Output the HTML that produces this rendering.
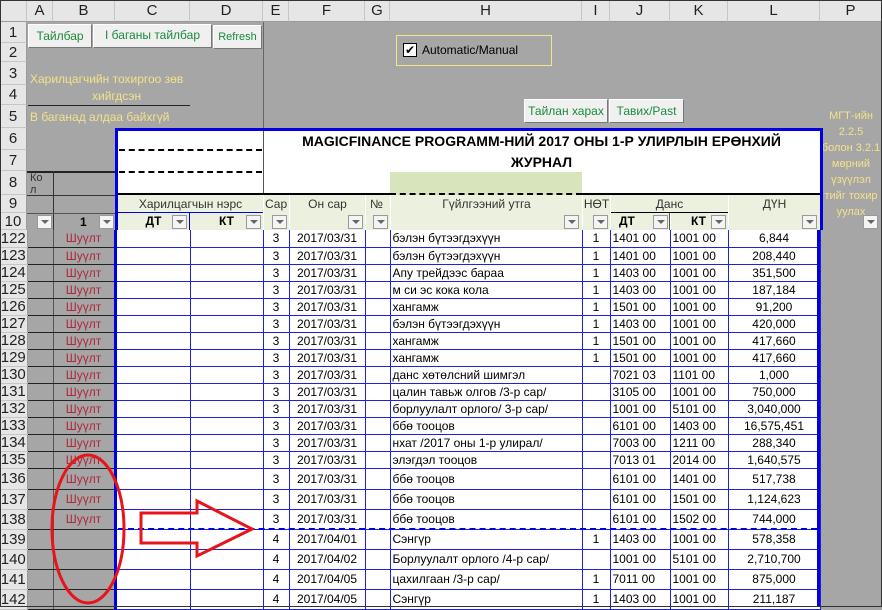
<!DOCTYPE html>
<html><head><meta charset="utf-8"><style>
*{margin:0;padding:0;box-sizing:border-box}
body{width:882px;height:607px;overflow:hidden;background:#a6a6a6;font-family:"Liberation Sans","DejaVu Sans",sans-serif;font-size:12px;position:relative;color:#000}
.a{position:absolute}
.ch{position:absolute;top:0;height:22px;background:#e6e6e6;border-right:1px solid #c6c6c6;border-bottom:1px solid #9a9a9a;text-align:center;line-height:22px;font-size:15px;color:#222}
.rh{position:absolute;left:0;width:27px;background:#e6e6e6;border-bottom:1px solid #c6c6c6;border-right:1px solid #9a9a9a;text-align:center;font-size:15px;color:#222}
.btn{position:absolute;background:#f0f0f0;border:1px solid #fff;border-right-color:#777;border-bottom-color:#777;color:#1a8a3a;text-align:center;font-size:12px}
.yt{position:absolute;color:#f2e28a;font-size:12px}
.hd{position:absolute;background:#ebf1de;text-align:center;font-size:12px;color:#333}
.dd{position:absolute;width:15px;height:14px;background:#f4f4f4;border:1px solid #999;}
.dd:after{content:"";position:absolute;left:3px;top:4px;border-left:4px solid transparent;border-right:4px solid transparent;border-top:4px solid #666}
table{position:absolute;left:0;top:230px;border-collapse:collapse;table-layout:fixed}
td{font-size:12px;line-height:12px;white-space:nowrap;overflow:hidden;padding:0 2px}
td.r{background:#e6e6e6;font-size:15px;line-height:13px;text-align:center;color:#222;border-bottom:1px solid #c6c6c6;border-right:1px solid #9a9a9a;padding:0}
td.g{background:#a6a6a6;border-right:1px solid #555;border-bottom:1px solid #222}
td.b{background:#a6a6a6;color:#b0283a;text-align:center;border-bottom:1px solid #222;border-right:3px solid #0000e0}
td.w{background:#fff;border-right:1px solid #2020e0;border-bottom:1px solid #2020e0}
td.c{text-align:center}
td.p{background:#a6a6a6;border:none}
</style></head><body>
<div class="ch" style="left:0;width:27px;background:#e6e6e6"></div>
<div class="ch" style="left:27px;width:26px">A</div>
<div class="ch" style="left:53px;width:62px">B</div>
<div class="ch" style="left:115px;width:75px">C</div>
<div class="ch" style="left:190px;width:73px">D</div>
<div class="ch" style="left:263px;width:26px">E</div>
<div class="ch" style="left:289px;width:76px">F</div>
<div class="ch" style="left:365px;width:25px">G</div>
<div class="ch" style="left:390px;width:192px">H</div>
<div class="ch" style="left:582px;width:28px">I</div>
<div class="ch" style="left:610px;width:60px">J</div>
<div class="ch" style="left:670px;width:58px">K</div>
<div class="ch" style="left:728px;width:92px">L</div>
<div class="ch" style="left:820px;width:62px">P</div>
<div class="rh" style="top:22px;height:21px;line-height:21px">1</div>
<div class="rh" style="top:43px;height:19px;line-height:19px">2</div>
<div class="rh" style="top:62px;height:23px;line-height:23px">3</div>
<div class="rh" style="top:85px;height:20px;line-height:20px">4</div>
<div class="rh" style="top:105px;height:23px;line-height:23px">5</div>
<div class="rh" style="top:128px;height:22px;line-height:22px">6</div>
<div class="rh" style="top:150px;height:21px;line-height:21px">7</div>
<div class="rh" style="top:171px;height:24px;line-height:24px">8</div>
<div class="rh" style="top:195px;height:18px;line-height:18px">9</div>
<div class="rh" style="top:213px;height:17px;line-height:17px">10</div>
<div class="a" style="left:263px;top:22px;width:1px;height:106px;background:#666"></div>
<div class="btn" style="left:28px;top:24px;width:64px;height:24px;line-height:22px">Тайлбар</div>
<div class="btn" style="left:93px;top:24px;width:119px;height:24px;line-height:20px">I баганы тайлбар</div>
<div class="btn" style="left:213px;top:25px;width:49px;height:24px;line-height:22px;font-size:11px">Refresh</div>
<div class="btn" style="left:524px;top:99px;width:84px;height:24px;line-height:22px">Тайлан харах</div>
<div class="btn" style="left:609px;top:99px;width:75px;height:24px;line-height:22px">Тавих/Past</div>
<div class="a" style="left:396px;top:35px;width:156px;height:31px;border:1px solid #f0e68c"></div>
<div class="a" style="left:403px;top:43px;width:14px;height:14px;border:1px solid #000;background:#fff;font-size:12px;line-height:12px;text-align:center;font-weight:bold">✔</div>
<div class="a" style="left:422px;top:43px;font-size:12px">Automatic/Manual</div>
<div class="yt" style="left:30px;top:72px">Харилцагчийн тохиргоо зөв</div>
<div class="yt" style="left:92px;top:89px">хийгдсэн</div>
<div class="a" style="left:28px;top:105px;width:162px;height:1px;background:#222"></div>
<div class="yt" style="left:30px;top:110px">B баганад алдаа байхгүй</div>
<div class="yt" style="left:820px;top:108px;width:62px;text-align:center;line-height:16px;font-size:11px">МГТ-ийн<br>2.2.5<br>болон 3.2.1<br>мөрний<br>үзүүлэл<br>тийг тохир<br>уулах</div>
<div class="a" style="left:115px;top:128px;width:708px;height:102px;background:#fff;border-top:3px solid #0000e0;border-left:3px solid #0000e0;border-right:3px solid #0000e0"></div>
<div class="a" style="left:263px;top:131px;width:1px;height:64px;background:#555"></div>
<div class="a" style="left:119px;top:149px;width:143px;border-top:2px dashed #000"></div>
<div class="a" style="left:119px;top:171px;width:143px;border-top:2px dashed #000"></div>
<div class="a" style="left:263px;top:131px;width:557px;text-align:center;font-weight:bold;font-size:14px;line-height:21px">MAGICFINANCE PROGRAMM-НИЙ 2017 ОНЫ 1-Р УЛИРЛЫН ЕРӨНХИЙ<br>ЖУРНАЛ</div>
<div class="a" style="left:390px;top:172px;width:192px;height:23px;background:#d8e4bc"></div>
<div class="a" style="left:27px;top:171px;width:88px;height:2px;background:#222"></div>
<div class="a" style="left:30px;top:172px;font-size:11px;color:#333;line-height:12px">Ко<br>л</div>
<div class="a" style="left:53px;top:171px;width:1px;height:59px;background:#333"></div>
<div class="a" style="left:27px;top:195px;width:88px;height:1px;background:#333"></div>
<div class="a" style="left:27px;top:213px;width:88px;height:1px;background:#555"></div>
<div class="dd" style="left:37px;top:215px"></div>
<div class="a" style="left:80px;top:215px;font-weight:bold;font-size:12px">1</div>
<div class="dd" style="left:99px;top:215px"></div>
<div class="a" style="left:118px;top:193px;width:272px;height:2px;background:#000"></div>
<div class="a" style="left:390px;top:193px;width:192px;border-top:2px dashed #000"></div>
<div class="a" style="left:582px;top:193px;width:238px;height:2px;background:#000"></div>
<div class="hd" style="left:118px;top:195px;width:145px;height:18px;line-height:18px;border-bottom:1px solid #0000e0">Харилцагчын нэрс</div>
<div class="hd" style="left:118px;top:213px;width:72px;height:17px;line-height:17px;font-weight:bold;color:#000;border-right:1px solid #0000e0">ДТ</div>
<div class="hd" style="left:190px;top:213px;width:73px;height:17px;line-height:17px;font-weight:bold;color:#000">КТ</div>
<div class="hd" style="left:264px;top:195px;width:25px;height:35px;line-height:18px;text-align:left;padding-left:1px">Сар</div>
<div class="hd" style="left:290px;top:195px;width:75px;height:35px;line-height:18px">Он сар</div>
<div class="hd" style="left:366px;top:195px;width:24px;height:35px;line-height:18px;text-align:left;padding-left:4px">№</div>
<div class="hd" style="left:391px;top:195px;width:191px;height:35px;line-height:18px">Гүйлгээний утга</div>
<div class="hd" style="left:583px;top:195px;width:27px;height:35px;line-height:18px">НӨТ</div>
<div class="hd" style="left:611px;top:195px;width:117px;height:18px;line-height:18px;border-bottom:1px solid #000">Данс</div>
<div class="hd" style="left:611px;top:213px;width:59px;height:17px;line-height:17px;font-weight:bold;color:#000;text-align:left;padding-left:8px;border-right:1px solid #555">ДТ</div>
<div class="hd" style="left:671px;top:213px;width:57px;height:17px;line-height:17px;font-weight:bold;color:#000;text-align:left;padding-left:20px">КТ</div>
<div class="hd" style="left:729px;top:195px;width:91px;height:35px;line-height:18px">ДҮН</div>
<div class="dd" style="left:172px;top:215px"></div>
<div class="dd" style="left:246px;top:215px"></div>
<div class="dd" style="left:272px;top:215px"></div>
<div class="dd" style="left:348px;top:215px"></div>
<div class="dd" style="left:373px;top:215px"></div>
<div class="dd" style="left:564px;top:215px"></div>
<div class="dd" style="left:593px;top:215px"></div>
<div class="dd" style="left:653px;top:215px"></div>
<div class="dd" style="left:711px;top:215px"></div>
<div class="dd" style="left:802px;top:215px"></div>
<div class="dd" style="left:863px;top:215px"></div>
<table>
<colgroup><col style="width:27px"><col style="width:26px"><col style="width:62px"><col style="width:75px"><col style="width:73px"><col style="width:26px"><col style="width:76px"><col style="width:25px"><col style="width:192px"><col style="width:28px"><col style="width:60px"><col style="width:58px"><col style="width:92px"><col style="width:62px"></colgroup>
<tr style="height:17px"><td class="r">122</td><td class="g"></td><td class="b">Шуүлт</td><td class="w"></td><td class="w"></td><td class="w c">3</td><td class="w c">2017/03/31</td><td class="w"></td><td class="w">бэлэн бүтээгдэхүүн</td><td class="w c">1</td><td class="w">1401 00</td><td class="w">1001 00</td><td class="w c">6,844</td><td class="p"></td></tr>
<tr style="height:17px"><td class="r">123</td><td class="g"></td><td class="b">Шуүлт</td><td class="w"></td><td class="w"></td><td class="w c">3</td><td class="w c">2017/03/31</td><td class="w"></td><td class="w">бэлэн бүтээгдэхүүн</td><td class="w c">1</td><td class="w">1401 00</td><td class="w">1001 00</td><td class="w c">208,440</td><td class="p"></td></tr>
<tr style="height:17px"><td class="r">124</td><td class="g"></td><td class="b">Шуүлт</td><td class="w"></td><td class="w"></td><td class="w c">3</td><td class="w c">2017/03/31</td><td class="w"></td><td class="w">Апу трейдээс бараа</td><td class="w c">1</td><td class="w">1403 00</td><td class="w">1001 00</td><td class="w c">351,500</td><td class="p"></td></tr>
<tr style="height:17px"><td class="r">125</td><td class="g"></td><td class="b">Шуүлт</td><td class="w"></td><td class="w"></td><td class="w c">3</td><td class="w c">2017/03/31</td><td class="w"></td><td class="w">м си эс кока кола</td><td class="w c">1</td><td class="w">1403 00</td><td class="w">1001 00</td><td class="w c">187,184</td><td class="p"></td></tr>
<tr style="height:17px"><td class="r">126</td><td class="g"></td><td class="b">Шуүлт</td><td class="w"></td><td class="w"></td><td class="w c">3</td><td class="w c">2017/03/31</td><td class="w"></td><td class="w">хангамж</td><td class="w c">1</td><td class="w">1501 00</td><td class="w">1001 00</td><td class="w c">91,200</td><td class="p"></td></tr>
<tr style="height:17px"><td class="r">127</td><td class="g"></td><td class="b">Шуүлт</td><td class="w"></td><td class="w"></td><td class="w c">3</td><td class="w c">2017/03/31</td><td class="w"></td><td class="w">бэлэн бүтээгдэхүүн</td><td class="w c">1</td><td class="w">1403 00</td><td class="w">1001 00</td><td class="w c">420,000</td><td class="p"></td></tr>
<tr style="height:17px"><td class="r">128</td><td class="g"></td><td class="b">Шуүлт</td><td class="w"></td><td class="w"></td><td class="w c">3</td><td class="w c">2017/03/31</td><td class="w"></td><td class="w">хангамж</td><td class="w c">1</td><td class="w">1501 00</td><td class="w">1001 00</td><td class="w c">417,660</td><td class="p"></td></tr>
<tr style="height:17px"><td class="r">129</td><td class="g"></td><td class="b">Шуүлт</td><td class="w"></td><td class="w"></td><td class="w c">3</td><td class="w c">2017/03/31</td><td class="w"></td><td class="w">хангамж</td><td class="w c">1</td><td class="w">1501 00</td><td class="w">1001 00</td><td class="w c">417,660</td><td class="p"></td></tr>
<tr style="height:17px"><td class="r">130</td><td class="g"></td><td class="b">Шуүлт</td><td class="w"></td><td class="w"></td><td class="w c">3</td><td class="w c">2017/03/31</td><td class="w"></td><td class="w">данс хөтөлсний шимгэл</td><td class="w"></td><td class="w">7021 03</td><td class="w">1101 00</td><td class="w c">1,000</td><td class="p"></td></tr>
<tr style="height:17px"><td class="r">131</td><td class="g"></td><td class="b">Шуүлт</td><td class="w"></td><td class="w"></td><td class="w c">3</td><td class="w c">2017/03/31</td><td class="w"></td><td class="w">цалин тавьж олгов /3-р сар/</td><td class="w"></td><td class="w">3105 00</td><td class="w">1001 00</td><td class="w c">750,000</td><td class="p"></td></tr>
<tr style="height:17px"><td class="r">132</td><td class="g"></td><td class="b">Шуүлт</td><td class="w"></td><td class="w"></td><td class="w c">3</td><td class="w c">2017/03/31</td><td class="w"></td><td class="w">борлуулалт орлого/ 3-р сар/</td><td class="w"></td><td class="w">1001 00</td><td class="w">5101 00</td><td class="w c">3,040,000</td><td class="p"></td></tr>
<tr style="height:17px"><td class="r">133</td><td class="g"></td><td class="b">Шуүлт</td><td class="w"></td><td class="w"></td><td class="w c">3</td><td class="w c">2017/03/31</td><td class="w"></td><td class="w">ббө тооцов</td><td class="w"></td><td class="w">6101 00</td><td class="w">1403 00</td><td class="w c">16,575,451</td><td class="p"></td></tr>
<tr style="height:17px"><td class="r">134</td><td class="g"></td><td class="b">Шуүлт</td><td class="w"></td><td class="w"></td><td class="w c">3</td><td class="w c">2017/03/31</td><td class="w"></td><td class="w">нхат /2017 оны 1-р улирал/</td><td class="w"></td><td class="w">7003 00</td><td class="w">1211 00</td><td class="w c">288,340</td><td class="p"></td></tr>
<tr style="height:17px"><td class="r">135</td><td class="g"></td><td class="b">Шуүлт</td><td class="w"></td><td class="w"></td><td class="w c">3</td><td class="w c">2017/03/31</td><td class="w"></td><td class="w">элэгдэл тооцов</td><td class="w"></td><td class="w">7013 01</td><td class="w">2014 00</td><td class="w c">1,640,575</td><td class="p"></td></tr>
<tr style="height:21px"><td class="r">136</td><td class="g"></td><td class="b">Шуүлт</td><td class="w"></td><td class="w"></td><td class="w c">3</td><td class="w c">2017/03/31</td><td class="w"></td><td class="w">ббө тооцов</td><td class="w"></td><td class="w">6101 00</td><td class="w">1401 00</td><td class="w c">517,738</td><td class="p"></td></tr>
<tr style="height:20px"><td class="r">137</td><td class="g"></td><td class="b">Шуүлт</td><td class="w"></td><td class="w"></td><td class="w c">3</td><td class="w c">2017/03/31</td><td class="w"></td><td class="w">ббө тооцов</td><td class="w"></td><td class="w">6101 00</td><td class="w">1501 00</td><td class="w c">1,124,623</td><td class="p"></td></tr>
<tr style="height:20px"><td class="r">138</td><td class="g"></td><td class="b">Шуүлт</td><td class="w"></td><td class="w"></td><td class="w c">3</td><td class="w c">2017/03/31</td><td class="w"></td><td class="w">ббө тооцов</td><td class="w"></td><td class="w">6101 00</td><td class="w">1502 00</td><td class="w c">744,000</td><td class="p"></td></tr>
<tr style="height:20px"><td class="r">139</td><td class="g"></td><td class="b"></td><td class="w"></td><td class="w"></td><td class="w c">4</td><td class="w c">2017/04/01</td><td class="w"></td><td class="w">Сэнгүр</td><td class="w c">1</td><td class="w">1403 00</td><td class="w">1001 00</td><td class="w c">578,358</td><td class="p"></td></tr>
<tr style="height:20px"><td class="r">140</td><td class="g"></td><td class="b"></td><td class="w"></td><td class="w"></td><td class="w c">4</td><td class="w c">2017/04/02</td><td class="w"></td><td class="w">Борлуулалт орлого /4-р сар/</td><td class="w"></td><td class="w">1001 00</td><td class="w">5101 00</td><td class="w c">2,710,700</td><td class="p"></td></tr>
<tr style="height:20px"><td class="r">141</td><td class="g"></td><td class="b"></td><td class="w"></td><td class="w"></td><td class="w c">4</td><td class="w c">2017/04/05</td><td class="w"></td><td class="w">цахилгаан /3-р сар/</td><td class="w c">1</td><td class="w">7011 00</td><td class="w">1001 00</td><td class="w c">875,000</td><td class="p"></td></tr>
<tr style="height:20px"><td class="r">142</td><td class="g"></td><td class="b"></td><td class="w"></td><td class="w"></td><td class="w c">4</td><td class="w c">2017/04/05</td><td class="w"></td><td class="w">Сэнгүр</td><td class="w c">1</td><td class="w">1403 00</td><td class="w">1001 00</td><td class="w c">211,187</td><td class="p"></td></tr>
</table>
<div class="a" style="left:817px;top:230px;width:3px;height:377px;background:#0000e0"></div>
<div class="a" style="left:118px;top:528px;width:699px;border-top:2px dashed #0000e0"></div>
<svg class="a" style="left:0;top:0" width="882" height="607">
<ellipse cx="88" cy="529" rx="36" ry="74" fill="none" stroke="#e8141c" stroke-width="3"/>
<polygon points="141,513 197,513 197,501 252,529 197,556 197,543 141,543" fill="none" stroke="#e8141c" stroke-width="3"/>
</svg>
<div class="a" style="left:0;top:0;width:882px;height:607px;border:1px solid #333"></div>
</body></html>
